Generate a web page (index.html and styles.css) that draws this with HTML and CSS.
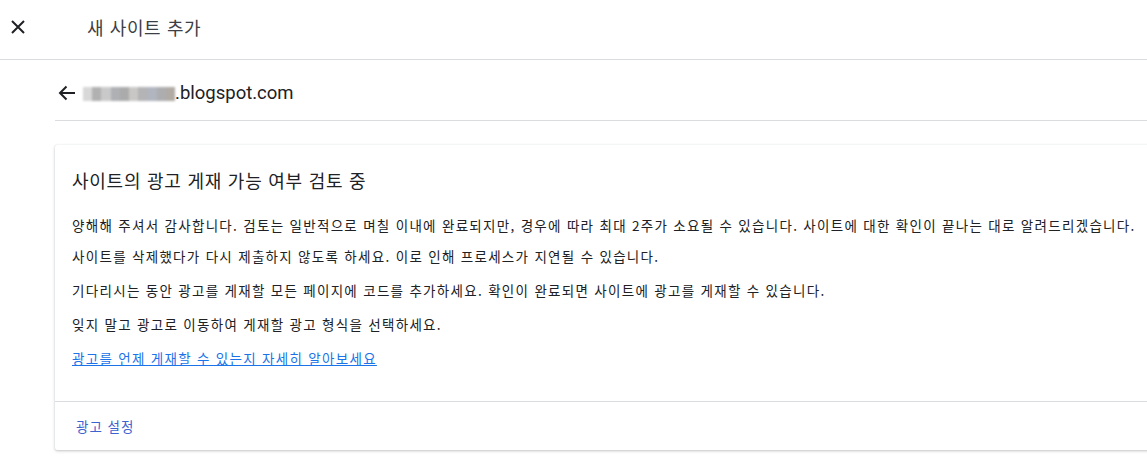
FILE: index.html
```html
<!DOCTYPE html>
<html lang="ko">
<head>
    <meta charset="UTF-8">
    <title>새 사이트 추가</title>
    <link rel="stylesheet" href="styles.css">
</head>
<body>
    <header class="top-bar">
        <button class="close-btn" aria-label="닫기">
            <svg width="14" height="14" viewBox="0 0 14 14"><path d="M1 1L13 13M13 1L1 13" stroke="#202124" stroke-width="2" fill="none"/></svg>
        </button>
        <h1 class="top-title">새 사이트 추가</h1>
    </header>

    <main class="content">
        <div class="site-row">
            <svg class="back-arrow" width="18" height="16" viewBox="0 0 18 16"><path d="M17 8H2M8.5 1.5L2 8l6.5 6.5" stroke="#202124" stroke-width="2" fill="none"/></svg>
            <span class="site-name"><span class="blur"></span>.blogspot.com</span>
        </div>

        <section class="card">
            <div class="card-body">
                <h2 class="card-title">사이트의 광고 게재 가능 여부 검토 중</h2>
                <p class="first">양해해 주셔서 감사합니다. 검토는 일반적으로 며칠 이내에 완료되지만, 경우에 따라 최대 2주가 소요될 수 있습니다. 사이트에 대한 확인이 끝나는 대로 알려드리겠습니다.</p>
                <p>사이트를 삭제했다가 다시 제출하지 않도록 하세요. 이로 인해 프로세스가 지연될 수 있습니다.</p>
                <p>기다리시는 동안 광고를 게재할 모든 페이지에 코드를 추가하세요. 확인이 완료되면 사이트에 광고를 게재할 수 있습니다.</p>
                <p>잊지 말고 광고로 이동하여 게재할 광고 형식을 선택하세요.</p>
                <p><a href="#">광고를 언제 게재할 수 있는지 자세히 알아보세요</a></p>
            </div>
            <div class="card-footer">
                <a href="#" class="footer-link">광고 설정</a>
            </div>
        </section>
    </main>
</body>
</html>
```

FILE: styles.css
```css
body {
    margin: 0;
    font-family: Roboto, "Noto Sans CJK KR", sans-serif;
    color: #202124;
    background: #fff;
    overflow: hidden;
    width: 1147px;
    height: 461px;
}

.top-bar {
    display: flex;
    align-items: center;
    height: 53px;
    padding-bottom: 6px;
    border-bottom: 1px solid #dadce0;
}

.close-btn {
    width: 36px;
    height: 36px;
    padding: 0;
    border: none;
    background: none;
    display: flex;
    align-items: center;
    justify-content: center;
}

.top-title {
    margin: 0 0 0 51px;
    font-size: 18px;
    font-weight: 400;
    letter-spacing: 0.6px;
    color: #3c4043;
    font-family: "Noto Sans CJK KR", sans-serif;
}

.content {
    margin-left: 55px;
    width: 1110px;
}

.site-row {
    display: flex;
    align-items: center;
    height: 54px;
    padding-top: 6px;
    border-bottom: 1px solid #dadce0;
    margin-bottom: 24px;
}

.back-arrow {
    margin-left: 3px;
    margin-right: 7px;
}

.site-name {
    font-size: 18.5px;
    display: flex;
    align-items: center;
    color: #202124;
}

.blur {
    display: inline-block;
    width: 92px;
    height: 14px;
    margin-top: 2px;
    background: linear-gradient(90deg, #d4d4d4 0 10%, #a9a9a9 10% 20%, #c4c4c4 20% 30%, #a6a8ab 30% 40%, #a3a3a3 40% 50%, #c4c2bf 50% 60%, #acabae 60% 70%, #a8adb8 70% 80%, #a5a5a8 80% 90%, #a8a29b 90%);
    filter: blur(1px);
    opacity: 0.9;
}

.card {
    border-radius: 2px;
    box-shadow: 0 1px 3px rgba(60, 64, 67, 0.3), 0 0 1px rgba(60, 64, 67, 0.15);
}

.card-body {
    padding: 22px 17px 33px;
    font-family: "Noto Sans CJK KR", sans-serif;
}

.card-title {
    margin: 0 0 23px;
    font-size: 18px;
    font-weight: 400;
    letter-spacing: 0.75px;
    color: #202124;
}

.card-body p {
    margin: 0 0 15px;
    font-size: 13.5px;
    line-height: 19px;
    letter-spacing: 1.3px;
    color: #202124;
    white-space: nowrap;
}

.card-body p.first {
    margin-bottom: 12px;
}

.card-body p:last-child {
    margin-bottom: 0;
}

.card-body a {
    color: #1a73e8;
}

.card-footer {
    border-top: 1px solid #dadce0;
    padding: 15px 21px 14px;
    font-size: 13px;
    line-height: 19px;
    font-family: "Noto Sans CJK KR", sans-serif;
}

.footer-link {
    font-size: 13.5px;
    letter-spacing: 1px;
    color: #3c63d0;
    text-decoration: none;
}
```
